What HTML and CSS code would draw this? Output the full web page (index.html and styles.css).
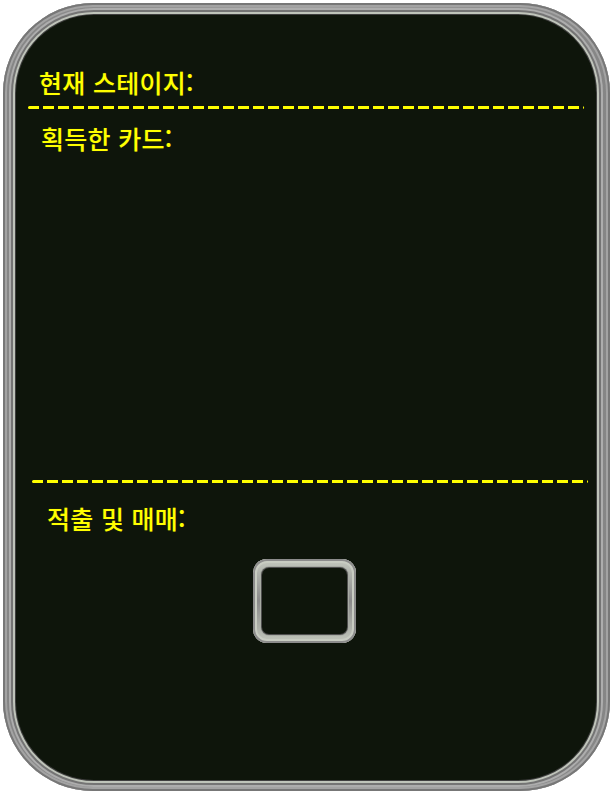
FILE: index.html
```html
<!DOCTYPE html>
<html lang="ko">
<head>
  <meta charset="UTF-8" />
  <meta name="viewport" content="width=device-width, initial-scale=1.0"/>
  <title>스테이지</title>
  <link rel="stylesheet" href="styles.css">
</head>
<body>
  <div class="frame">
    <div class="panel">
      <h2 class="stage">현재 스테이지:</h2>
      <div class="dash dash-top"></div>

      <h2 class="cards-title">획득한 카드:</h2>
      <div class="cards"></div>

      <div class="dash dash-bottom"></div>
      <h2 class="trade-title">적출 및 매매:</h2>

      <div class="slot">
        <div class="slot-inner"></div>
      </div>
    </div>
  </div>
</body>
</html>
```

FILE: styles.css
```css
* {
  box-sizing: border-box;
}

body {
  margin: 0;
  background-color: #ffffff;
  font-family: "Noto Sans CJK KR", "Noto Sans", sans-serif;
}

.frame {
  width: 607px;
  height: 788px;
  margin: 3px;
  padding: 12px 14px 11px 13px;
  border-radius: 90px;
  background: linear-gradient(90deg, #858585, #a0a0a0 50%, #858585);
  box-shadow: inset 0 0 0 2px #777777, inset 0 0 0 4px #a3a3a3;
}

.panel {
  height: 100%;
  border-radius: 78px;
  background-color: #0e150b;
  padding-top: 52px;
  box-shadow: 0 0 0 1px #3e3e3e, 0 0 0 3px #bfc4ba, 0 0 0 5px #747474, 0 0 0 7px #adadad;
}

h2 {
  margin: 0;
  font-size: 25px;
  line-height: 30px;
  font-weight: 500;
  letter-spacing: 0.3px;
  color: #ffff00;
  text-shadow: 0 0 1px #5a5a00;
}

.stage {
  padding-left: 23px;
}

.dash {
  height: 3px;
  border-radius: 2px;
  background: repeating-linear-gradient(90deg, #ffff00 0 11px, transparent 11px 15px);
}

.dash-top {
  margin: 9px 12px 0 12px;
}

.cards-title {
  margin-top: 14px;
  padding-left: 25px;
}

.cards {
  height: 327px;
}

.dash-bottom {
  margin: 0 8px 0 16px;
}

.trade-title {
  margin-top: 20px;
  padding-left: 31px;
}

.slot {
  width: 103px;
  height: 84px;
  margin: 26px 0 0 237px;
  padding: 9px;
  border-radius: 14px;
  background: linear-gradient(180deg, #c4c9bf, #8a8a8a 50%, #c2c7bc);
  box-shadow: inset 0 0 0 2px #8c8c8c, inset 0 0 0 4px #c8ccc2;
}

.slot-inner {
  height: 100%;
  border-radius: 7px;
  background-color: #0e150b;
  box-shadow: 0 0 0 1px #4e4e4e, 0 0 0 2px #a8aca4;
}
```
